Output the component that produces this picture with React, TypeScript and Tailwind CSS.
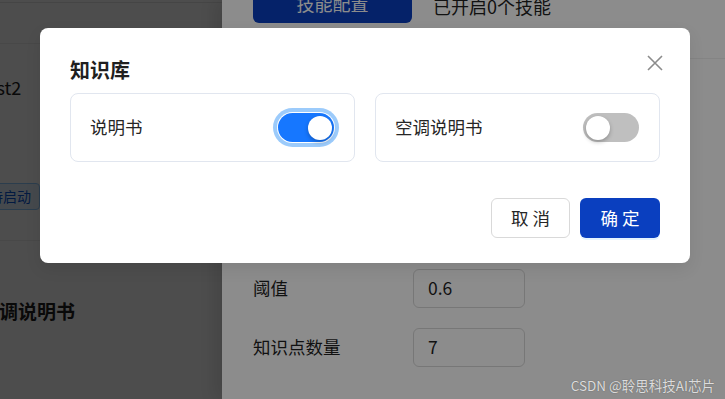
import { useState } from "react";

const kbs = [
  { id: "manual", name: "说明书", on: true },
  { id: "ac", name: "空调说明书", on: false },
];

function Toggle({ on, focused, onClick }: { on: boolean; focused?: boolean; onClick: () => void }) {
  return (
    <button
      onClick={onClick}
      className={`flex items-center w-[56px] h-[29px] rounded-full p-[2.5px] ${
        on ? "bg-[#1677ff] justify-end" : "bg-[#bfbfbf] justify-start"
      } ${focused ? "ring-4 ring-[#9ccbfb] ring-offset-1" : ""}`}
    >
      <span className="block w-[24px] h-[24px] rounded-full bg-white shadow-[0_2px_4px_rgba(0,0,0,0.25)]" />
    </button>
  );
}

export default function App() {
  const [state, setState] = useState(kbs);

  return (
    <div className="relative w-[725px] h-[399px] overflow-hidden bg-white font-['Noto_Sans_CJK_SC','Noto_Sans',sans-serif] text-[#1f1f1f]">
      {/* page behind the drawer */}
      <div className="w-[222px] h-full bg-white">
        <div className="-ml-[20px] flex flex-col">
          <div className="h-[3px] border-b border-[#e8e8e8]" />
          <div className="h-[41px] border-b border-[#eeeeee]" />
          <div className="pt-[30px] text-[18px] leading-[26px]">test2</div>
          <div className="mt-[83px] flex">
            <span className="border border-[#91caff] bg-[#e6f4ff] text-[#0958d9] text-[14px] leading-[25px] px-[8px] rounded-[4px]">
              待启动
            </span>
          </div>
          <div className="mt-[30px] border-b border-[#eeeeee]" />
          <div className="mt-[56px] text-[19px] leading-[28px] font-bold">空调说明书</div>
        </div>
      </div>

      {/* drawer mask */}
      <div className="absolute inset-0 bg-black/45" />

      {/* drawer */}
      <div className="absolute top-0 right-0 bottom-0 w-[503px] bg-white shadow-[-6px_0_16px_rgba(0,0,0,0.12)]">
        <div className="h-[59px] border-b border-[#f0f0f0] px-[31px] flex items-start gap-[21px]">
          <div className="-mt-[17px] w-[159px] h-[40px] rounded-md bg-[#0a3fbf] text-white text-[18px] flex items-center justify-center">
            技能配置
          </div>
          <div className="-mt-[7px] text-[18px] leading-[26px]">已开启0个技能</div>
        </div>
        <div className="pt-[210px] px-[31px] flex flex-col gap-[20px] text-[17.5px]">
          <div className="flex items-center">
            <span className="w-[160px]">阈值</span>
            <div className="w-[112px] h-[39px] rounded-md border border-[#d9d9d9] pl-[14px] flex items-center">0.6</div>
          </div>
          <div className="flex items-center">
            <span className="w-[160px]">知识点数量</span>
            <div className="w-[112px] h-[39px] rounded-md border border-[#d9d9d9] pl-[14px] flex items-center">7</div>
          </div>
        </div>
      </div>

      {/* modal mask */}
      <div className="absolute inset-0 bg-black/45" />

      {/* modal */}
      <div className="absolute left-[40px] top-[28px] w-[650px] h-[235px] rounded-lg bg-white shadow-[0_6px_16px_rgba(0,0,0,0.08)] px-[30px] pt-[28px]">
        <button className="absolute top-[27px] right-[27px] w-[16px] h-[16px]">
          <svg width="16" height="16" viewBox="0 0 16 16" fill="none" stroke="#8c8c8c" strokeWidth="1.6">
            <path d="M1 1 L15 15 M15 1 L1 15" />
          </svg>
        </button>
        <h2 className="text-[20px] leading-[28px] font-bold">知识库</h2>
        <div className="mt-[9px] grid grid-cols-2 gap-[20px]">
          {state.map((kb, i) => (
            <div
              key={kb.id}
              className="h-[69px] rounded-lg border border-[#e1e6ef] pl-[19px] pr-[20px] flex items-center justify-between"
            >
              <span className="text-[17.5px] text-[#262626]">{kb.name}</span>
              <Toggle
                on={kb.on}
                focused={i === 0}
                onClick={() => setState(state.map((k) => (k.id === kb.id ? { ...k, on: !k.on } : k)))}
              />
            </div>
          ))}
        </div>
        <div className="mt-[36px] flex justify-end gap-[10px]">
          <button className="w-[79px] h-[40px] rounded-md border border-[#d9d9d9] bg-white text-[17.5px] tracking-[4px] pl-[4px] text-[#262626]">
            取消
          </button>
          <button className="w-[80px] h-[40px] rounded-md bg-[#0a3fbf] text-white text-[17.5px] tracking-[4px] pl-[4px] shadow-[0_2px_0_rgba(5,145,255,0.1)]">
            确定
          </button>
        </div>
      </div>

      {/* watermark */}
      <div className="absolute right-[10px] bottom-[5px] text-[13.5px] leading-[18px] text-white/80 [text-shadow:0_0_1px_rgba(0,0,0,0.5)]">
        CSDN @聆思科技AI芯片
      </div>
    </div>
  );
}
